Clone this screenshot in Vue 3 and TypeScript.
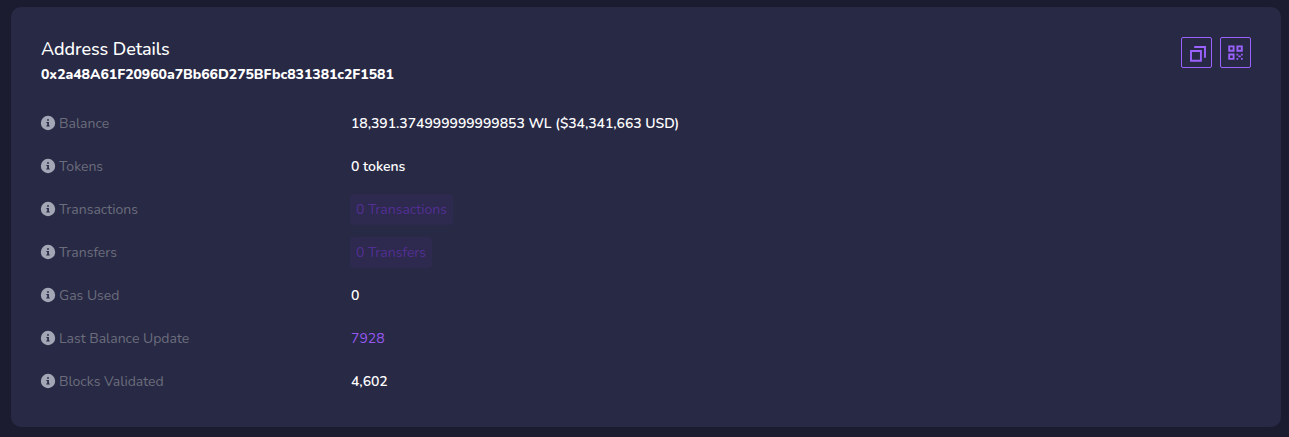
<script setup lang="ts">
interface Row {
  id: string
  label: string
  value: string
  kind: 'text' | 'tile' | 'link'
}

const rows: Row[] = [
  { id: 'balance', label: 'Balance', value: '18,391.374999999999853 WL ($34,341,663 USD)', kind: 'text' },
  { id: 'tokens', label: 'Tokens', value: '0 tokens', kind: 'text' },
  { id: 'transactions', label: 'Transactions', value: '0 Transactions', kind: 'tile' },
  { id: 'transfers', label: 'Transfers', value: '0 Transfers', kind: 'tile' },
  { id: 'gas', label: 'Gas Used', value: '0', kind: 'text' },
  { id: 'updated', label: 'Last Balance Update', value: '7928', kind: 'link' },
  { id: 'blocks', label: 'Blocks Validated', value: '4,602', kind: 'text' },
]
</script>

<template>
  <main class="page">
    <section class="card">
      <header class="head">
        <div>
          <h1 class="title">Address Details</h1>
          <h3 class="address">0x2a48A61F20960a7Bb66D275BFbc831381c2F1581</h3>
        </div>
        <div class="actions">
          <button class="action" type="button" aria-label="Copy address">
            <svg width="29" height="29" viewBox="0 0 29 29" fill="none" stroke="currentColor" stroke-width="1.9">
              <path d="M9 13h9.9v9.8H9z" />
              <path d="M12.2 9h10.8v10.7" />
            </svg>
          </button>
          <button class="action" type="button" aria-label="QR code">
            <svg width="29" height="29" viewBox="0 0 29 29" fill="none" stroke="currentColor" stroke-width="1.9">
              <path d="M8.2 8.4h4.4v4.4H8.2zM16.4 8.4h4.4v4.4h-4.4zM8.2 16.5h4.4v4.4H8.2z" />
              <g fill="currentColor" stroke="none">
                <path d="M15.5 15.8h1.7v1.6h-1.7zM20 15.8h1.7v1.6H20zM17.3 17.6h2.5v1.7h-2.5zM15.5 20h1.7v1.7h-1.7zM20 20h1.7v1.7H20z" />
              </g>
            </svg>
          </button>
        </div>
      </header>
      <dl class="rows">
        <div v-for="row in rows" :key="row.id" class="row">
          <dt class="label">
            <svg class="info" width="14" height="14" viewBox="0 0 14 14">
              <circle cx="7" cy="7" r="7.2" fill="#a3a6b5" />
              <path d="M6.1 3.2h1.8v1.6H6.1zM5.4 5.9h2.5v3.6h.8v1.1H5.3V9.5h.9V7h-.8z" fill="#282945" />
            </svg>
            <span class="name">{{ row.label }}</span>
          </dt>
          <dd class="value"><span :class="row.kind">{{ row.value }}</span></dd>
        </div>
      </dl>
    </section>
  </main>
</template>

<style>
body {
  margin: 0;
  background: #1c1c31;
}
</style>

<style scoped>
.page {
  box-sizing: border-box;
  height: 437px;
  padding: 7px 8px 10px 11px;
  background: #1c1c31;
  font-family: Nunito, Lato, "Open Sans", sans-serif;
  font-size: 14px;
  color: #fff;
}
.card {
  box-sizing: border-box;
  height: 420px;
  padding: 30px;
  border-radius: 10px;
  background: #282945;
}
.head {
  display: flex;
  justify-content: space-between;
  height: 64px;
}
.title {
  margin: 0;
  font-size: 18px;
  font-weight: 500;
  line-height: 24px;
  letter-spacing: -0.07px;
}
.address {
  margin: 4px 0 0;
  font-size: 14px;
  font-weight: 800;
  line-height: 20px;
  letter-spacing: -0.04px;
}
.actions {
  display: flex;
  gap: 8px;
}
.action {
  box-sizing: border-box;
  width: 31px;
  height: 31px;
  padding: 0;
  border: 1px solid #9b62ff;
  border-radius: 2px;
  background: none;
  color: #9b62ff;
}
.action svg {
  display: block;
}
.rows {
  margin: 0;
}
.row {
  display: flex;
  align-items: center;
  height: 43px;
}
.label {
  display: flex;
  align-items: center;
  gap: 4px;
  width: 310px;
  color: #6b6d7c;
}
.info {
  overflow: visible;
}
.name {
  padding-top: 2px;
}
.value {
  margin: 0;
}
.text,
.link {
  display: block;
  padding-top: 2px;
}
.text {
  font-weight: 600;
  letter-spacing: -0.04px;
}
.link {
  color: #9458f0;
}
.tile {
  display: block;
  box-sizing: border-box;
  height: 31px;
  margin: 2px 0 0 -1px;
  padding: 0 6px;
  border-radius: 4px;
  background: #2d294f;
  color: #532f92;
  line-height: 31px;
}
</style>
